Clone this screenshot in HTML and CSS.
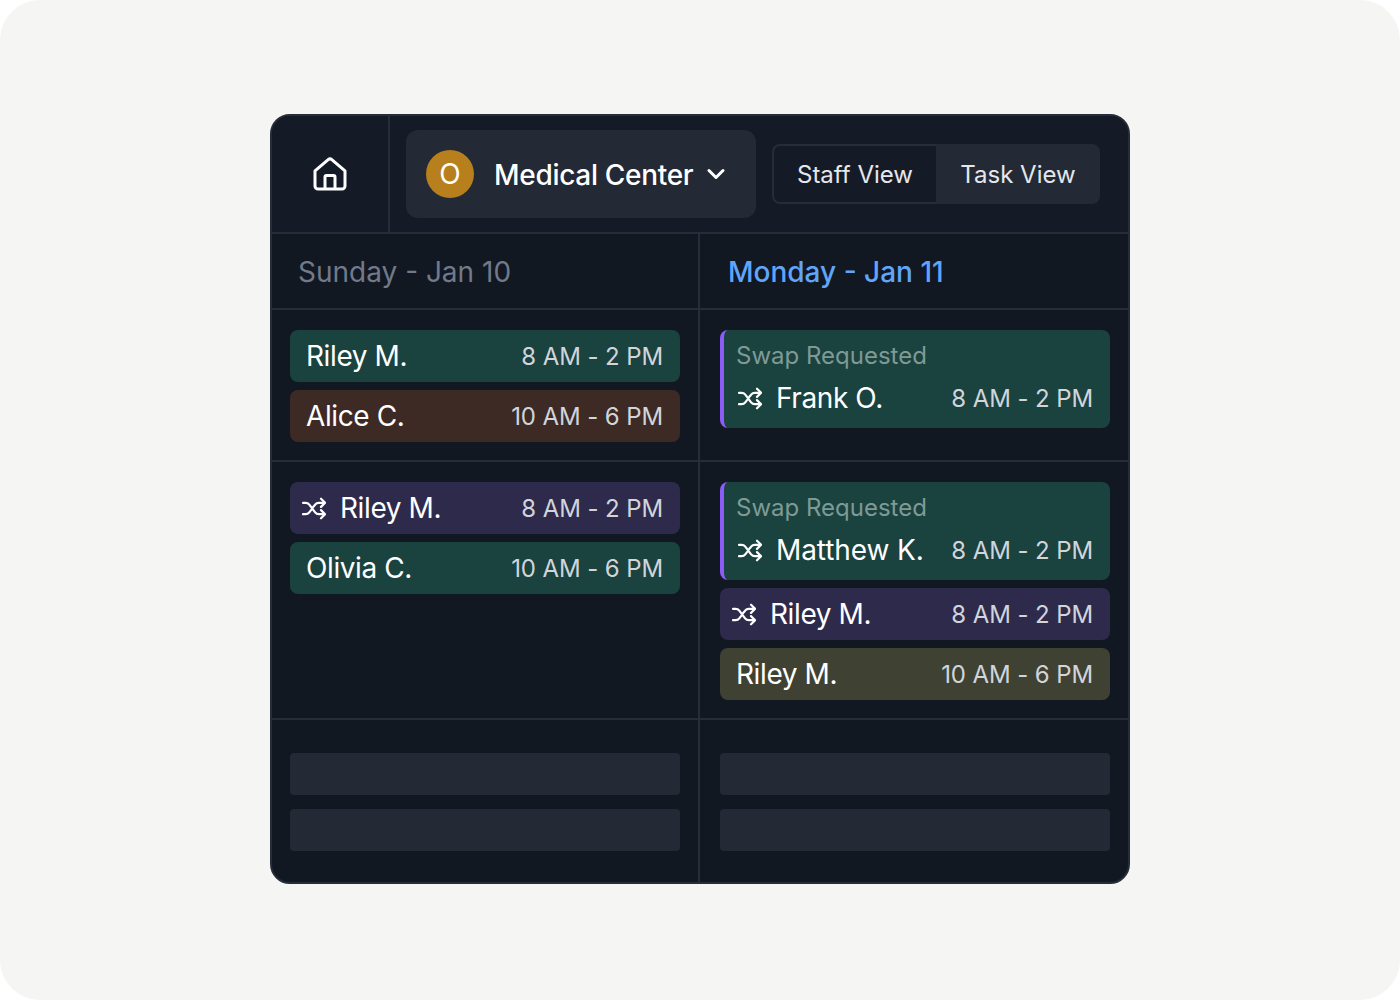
FILE: index.html
```html
<!DOCTYPE html>
<html lang="en">
<head>
    <meta charset="UTF-8">
    <title>Schedule</title>
    <link rel="stylesheet" href="styles.css">
</head>
<body>

    <svg class="icon-defs" width="0" height="0">
        <symbol id="shuffle" viewBox="0 0 24 24">
            <path d="M1 6.800h2.600c1.500 0 2.800.7 3.700 1.900l5.800 7.600c.9 1.200 2.200 1.900 3.700 1.900h5.800M1 18.200h2.600c1.500 0 2.800-.7 3.700-1.900l1.900-2.500M10.900 11.200l2.200-2.500c.9-1.200 2.200-1.900 3.700-1.900h5.800M19 2.700l4.100 4.100L19 10.900M19 14.100l4.100 4.100L19 22.300" fill="none" stroke="currentColor" stroke-width="2.200" stroke-linecap="round" stroke-linejoin="round"/>
        </symbol>
    </svg>

    <div class="schedule">

        <!-- Top bar -->
        <div class="topbar">
            <div class="home-cell">
                <svg class="home-icon" viewBox="0 0 36 36">
                    <path d="M3 14.800 16.200 3.600a2.800 2.800 0 0 1 3.600 0L33 14.800V30a3 3 0 0 1-3 3H6a3 3 0 0 1-3-3Z" fill="none" stroke="currentColor" stroke-width="3" stroke-linejoin="round"/>
                    <path d="M13 33V21a1.500 1.500 0 0 1 1.500-1.500h7A1.500 1.500 0 0 1 23 21v12" fill="none" stroke="currentColor" stroke-width="3"/>
                </svg>
            </div>
            <div class="topbar-main">
                <div class="org-picker">
                    <span class="org-avatar">O</span>
                    <span class="org-name">Medical Center</span>
                    <svg class="chevron" viewBox="0 0 18 12">
                        <path d="M2 2.500 9 9.500 16 2.500" fill="none" stroke="currentColor" stroke-width="3" stroke-linecap="round" stroke-linejoin="round"/>
                    </svg>
                </div>
                <div class="view-toggle">
                    <span class="view-option active">Staff View</span>
                    <span class="view-option">Task View</span>
                </div>
            </div>
        </div>

        <!-- Day headers -->
        <div class="grid-row">
            <div class="day-cell muted">Sunday - Jan 10</div>
            <div class="day-cell today">Monday - Jan 11</div>
        </div>

        <!-- Morning -->
        <div class="grid-row row-one">
            <div class="shift-cell">
                <div class="shift green"><span class="name">Riley M.</span><span class="time">8 AM - 2 PM</span></div>
                <div class="shift brown"><span class="name">Alice C.</span><span class="time">10 AM - 6 PM</span></div>
            </div>
            <div class="shift-cell">
                <div class="shift green swap">
                    <div class="swap-label">Swap Requested</div>
                    <div class="swap-line">
                        <svg class="shuffle-icon"><use href="#shuffle"/></svg>
                        <span class="name">Frank O.</span><span class="time">8 AM - 2 PM</span>
                    </div>
                </div>
            </div>
        </div>

        <!-- Afternoon -->
        <div class="grid-row row-two">
            <div class="shift-cell">
                <div class="shift purple">
                    <svg class="shuffle-icon"><use href="#shuffle"/></svg>
                    <span class="name">Riley M.</span><span class="time">8 AM - 2 PM</span>
                </div>
                <div class="shift green"><span class="name">Olivia C.</span><span class="time">10 AM - 6 PM</span></div>
            </div>
            <div class="shift-cell">
                <div class="shift green swap">
                    <div class="swap-label">Swap Requested</div>
                    <div class="swap-line">
                        <svg class="shuffle-icon"><use href="#shuffle"/></svg>
                        <span class="name wide">Matthew K.</span><span class="time">8 AM - 2 PM</span>
                    </div>
                </div>
                <div class="shift purple">
                    <svg class="shuffle-icon"><use href="#shuffle"/></svg>
                    <span class="name">Riley M.</span><span class="time">8 AM - 2 PM</span>
                </div>
                <div class="shift olive"><span class="name">Riley M.</span><span class="time">10 AM - 6 PM</span></div>
            </div>
        </div>

        <!-- Empty placeholders -->
        <div class="grid-row row-three">
            <div class="empty-cell">
                <div class="placeholder"></div>
                <div class="placeholder"></div>
            </div>
            <div class="empty-cell">
                <div class="placeholder"></div>
                <div class="placeholder"></div>
            </div>
        </div>

    </div>

</body>
</html>
```
FILE: styles.css
```css
* {
    box-sizing: border-box;
}

html, body {
    margin: 0;
    height: 100%;
}

html {
    background-color: #fff;
}

body {
    width: 1400px;
    height: 1000px;
    overflow: hidden;
    padding-top: 114px;
    background-color: #f5f5f4;
    border-radius: 40px;
    font-family: Inter, "Liberation Sans", sans-serif;
    color: #fff;
}

.icon-defs {
    position: absolute;
}

.schedule {
    width: 860px;
    height: 770px;
    margin: 0 auto;
    background-color: #111822;
    border: 2px solid #262c38;
    border-radius: 20px;
    overflow: hidden;
}

/* Top bar */
.topbar {
    display: flex;
    height: 118px;
    background-color: #151b26;
    border-bottom: 2px solid #262c38;
}

.home-cell {
    width: 118px;
    display: flex;
    align-items: center;
    justify-content: center;
    border-right: 2px solid #262c38;
}

.home-icon {
    width: 36px;
    height: 36px;
}

.topbar-main {
    display: flex;
    align-items: center;
    gap: 16px;
    padding-left: 16px;
}

.org-picker {
    width: 350px;
    height: 88px;
    display: flex;
    align-items: center;
    padding-left: 20px;
    background-color: #232935;
    border-radius: 12px;
}

.org-avatar {
    width: 48px;
    height: 48px;
    display: flex;
    align-items: center;
    justify-content: center;
    border-radius: 50%;
    background-color: #b7801d;
    font-size: 28px;
}

.org-name {
    margin-left: 20px;
    padding-top: 2px;
    font-size: 28px;
    font-weight: 500;
    letter-spacing: -0.3px;
}

.chevron {
    width: 18px;
    height: 12px;
    margin-left: 14px;
}

.view-toggle {
    width: 328px;
    height: 60px;
    display: flex;
    background-color: #232935;
    border-radius: 8px;
    overflow: hidden;
    font-size: 24px;
    color: #e5e7eb;
}

.view-option {
    flex: 1;
    display: flex;
    align-items: center;
    justify-content: center;
}

.view-option.active {
    flex: none;
    width: 164px;
    background-color: #151b26;
    border: 2px solid #262c38;
    border-right: none;
    border-radius: 8px 0 0 8px;
}

/* Grid */
.grid-row {
    display: grid;
    grid-template-columns: 428px 1fr;
    border-bottom: 2px solid #262c38;
}

.grid-row:last-child {
    border-bottom: none;
}

.grid-row > div:first-child {
    border-right: 2px solid #262c38;
}

.row-one {
    height: 152px;
}

.row-two {
    height: 258px;
}

.row-three {
    height: 162px;
}

.day-cell {
    height: 74px;
    display: flex;
    align-items: center;
    padding-top: 2px;
    font-size: 28px;
}

.day-cell.muted {
    padding-left: 26px;
    color: #727a8a;
}

.day-cell.today {
    padding-left: 28px;
    color: #60a5fa;
    font-weight: 500;
}

.shift-cell {
    display: flex;
    flex-direction: column;
    gap: 8px;
    padding: 20px 18px 0;
}

.shift-cell:last-child {
    padding: 20px 18px 0 20px;
}

.shift {
    min-height: 52px;
    display: flex;
    align-items: center;
    padding: 0 16px;
    border-radius: 8px;
}

.name {
    font-size: 28px;
    letter-spacing: -0.4px;
}

.name.wide {
    letter-spacing: -0.1px;
}

.time {
    margin-left: auto;
    margin-right: 1px;
    font-size: 24px;
    letter-spacing: -0.1px;
    color: #d1d5db;
}

.green {
    background-color: #1a423e;
}

.brown {
    background-color: #3d2a25;
}

.purple {
    background-color: #2e2a4c;
    padding-left: 10px;
}

.olive {
    background-color: #3f4232;
}

.swap {
    display: block;
    height: 98px;
    padding: 12px 16px 0 12px;
    border-left: 4px solid #8b5cf6;
}

.swap-label {
    font-size: 24px;
    line-height: 28px;
    color: #7f9a96;
}

.swap-line {
    display: flex;
    align-items: center;
    height: 34px;
    margin-top: 11px;
}

.shuffle-icon {
    width: 24px;
    height: 24px;
    margin: 0 14px 0 2px;
    flex: none;
}

.empty-cell {
    display: flex;
    flex-direction: column;
    gap: 14px;
    padding: 33px 18px 0;
}

.empty-cell:last-child {
    padding-left: 20px;
}

.placeholder {
    height: 42px;
    background-color: #232935;
    border-radius: 4px;
}
```
